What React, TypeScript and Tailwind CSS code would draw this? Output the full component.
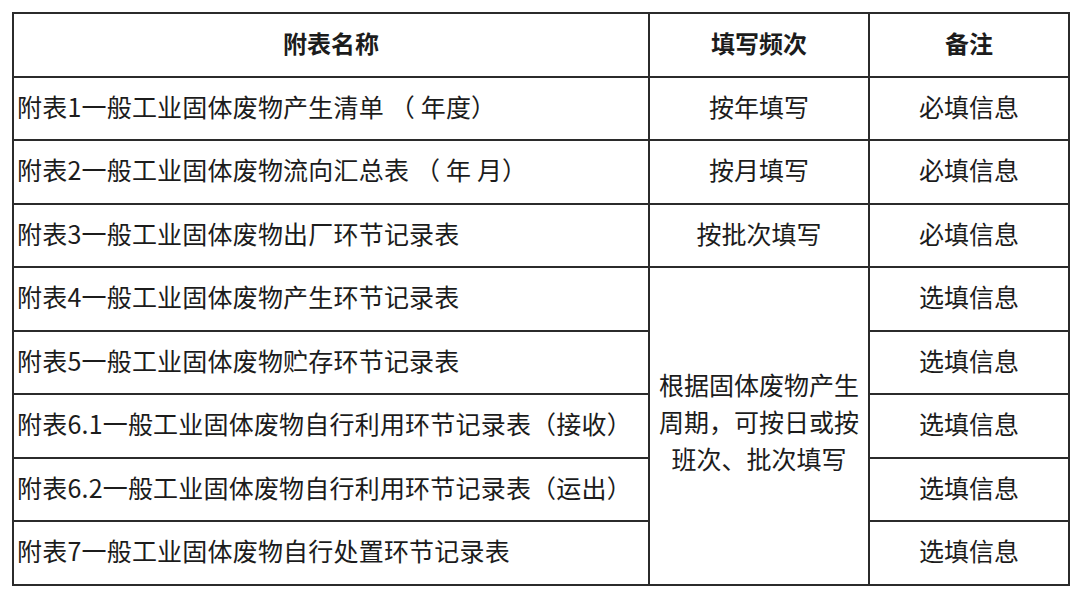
const rows: { name: string; freq?: string; note: string }[] = [
  { name: '附表1一般工业固体废物产生清单 （ 年度）', freq: '按年填写', note: '必填信息' },
  { name: '附表2一般工业固体废物流向汇总表 （ 年 月）', freq: '按月填写', note: '必填信息' },
  { name: '附表3一般工业固体废物出厂环节记录表', freq: '按批次填写', note: '必填信息' },
  { name: '附表4一般工业固体废物产生环节记录表', note: '选填信息' },
  { name: '附表5一般工业固体废物贮存环节记录表', note: '选填信息' },
  { name: '附表6.1一般工业固体废物自行利用环节记录表（接收）', note: '选填信息' },
  { name: '附表6.2一般工业固体废物自行利用环节记录表（运出）', note: '选填信息' },
  { name: '附表7一般工业固体废物自行处置环节记录表', note: '选填信息' },
];

const cell = 'border-2 border-[#2b2b2b] h-[63.5px] p-0 pb-[4px]';

export default function App() {
  return (
    <div
      className="w-[1080px] h-[596px] bg-white pt-[12px] pl-[12px] text-[#1c1c1c]"
      style={{ fontFamily: '"Noto Sans CJK SC", "Noto Sans", sans-serif' }}
    >
      <table className="border-collapse table-fixed w-[1056px] text-[25px] leading-none">
        <colgroup>
          <col className="w-[636px]" />
          <col className="w-[220px]" />
          <col className="w-[200px]" />
        </colgroup>
        <thead>
          <tr>
            <th className={`${cell} font-bold text-center text-[24px]`}>附表名称</th>
            <th className={`${cell} font-bold text-center text-[24px]`}>填写频次</th>
            <th className={`${cell} font-bold text-center text-[24px]`}>备注</th>
          </tr>
        </thead>
        <tbody>
          {rows.map((r, i) => (
            <tr key={r.name}>
              <td className={`${cell} text-left pl-[3px] whitespace-nowrap tracking-[0.2px]`}>{r.name}</td>
              {r.freq && <td className={`${cell} text-center`}>{r.freq}</td>}
              {i === 3 && (
                <td rowSpan={5} className={`${cell} text-center leading-[37px] pb-[8px]`}>
                  根据固体废物产生
                  <br />
                  周期，可按日或按
                  <br />
                  班次、批次填写
                </td>
              )}
              <td className={`${cell} text-center`}>{r.note}</td>
            </tr>
          ))}
        </tbody>
      </table>
    </div>
  );
}
